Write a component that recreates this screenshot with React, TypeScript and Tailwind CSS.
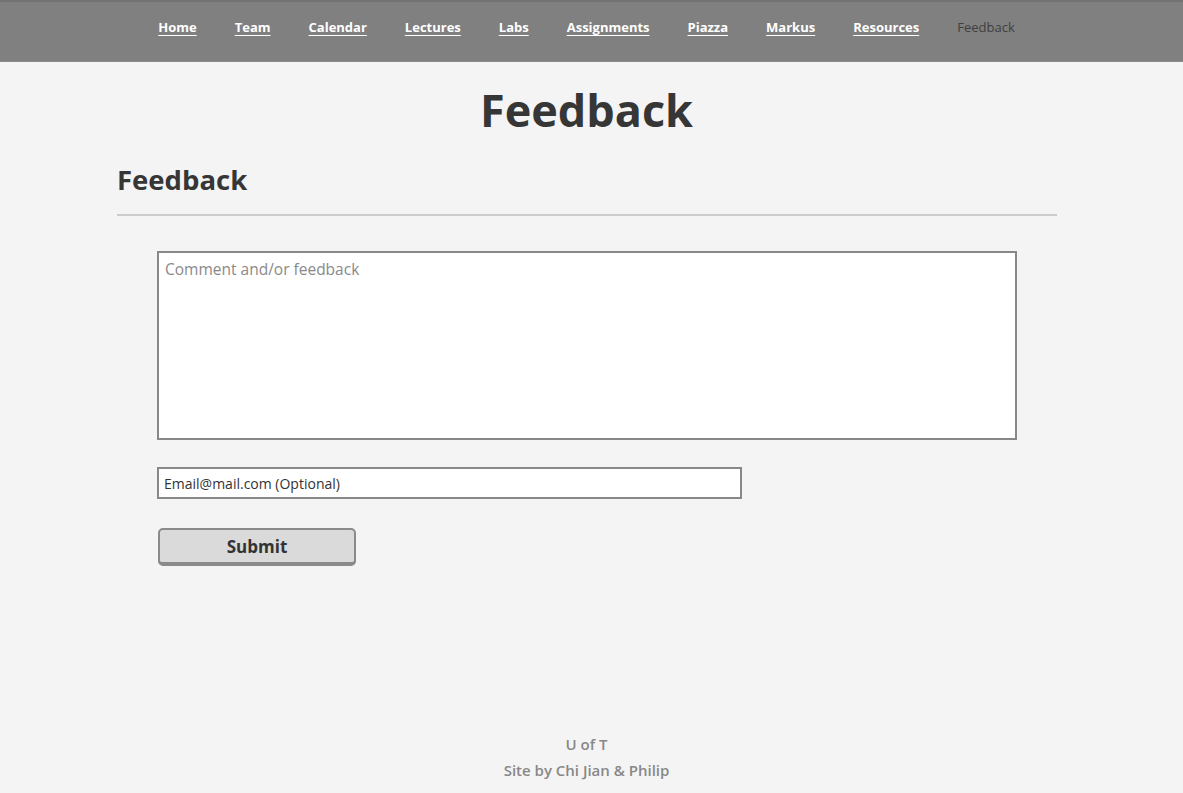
import React from "react";

const links = ["Home", "Team", "Calendar", "Lectures", "Labs", "Assignments", "Piazza", "Markus", "Resources"];

export default function App() {
  return (
    <div className="min-h-[793px] bg-[#f4f4f4] text-[#333] flex flex-col" style={{ fontFamily: '"Open Sans", "Noto Sans", sans-serif' }}>
      <nav className="h-[62px] bg-[#808080] border-t-2 border-[#727272] border-b border-b-[#8a8a8a]">
        <div className="w-[1173px] flex justify-center items-start pt-[15px] gap-[38px]">
          {links.map((l) => (
            <a key={l} href="#" className="text-white font-bold text-[13px] underline underline-offset-[3px] leading-[20px]">
              {l}
            </a>
          ))}
          <span className="text-[#3f3f3f] text-[13px] leading-[20px]">Feedback</span>
        </div>
      </nav>
      <div className="w-[1173px] flex flex-col flex-1">
        <h1 className="text-center font-bold text-[45px] leading-[56px] mt-[20px] text-[#363636]">Feedback</h1>
        <div className="ml-[117px] w-[940px]">
          <h2 className="font-bold text-[27.5px] leading-[36px] mt-[24px] text-[#363636]">Feedback</h2>
          <div className="h-[2px] bg-[#cccccc] mt-[16px]" />
          <div className="pl-[40px] pt-[35px] flex flex-col">
            <textarea
              className="w-[860px] h-[189px] bg-white border-2 border-[#888888] px-[6px] pt-[5px] text-[15.5px] placeholder:text-[#8a8a8a] resize-none outline-none"
              placeholder="Comment and/or feedback"
            />
            <input
              className="mt-[27px] w-[585px] h-[32px] bg-white border-2 border-[#888888] px-[5px] text-[14px] placeholder:text-[#333] outline-none"
              placeholder="Email@mail.com (Optional)"
            />
            <button className="mt-[29px] ml-[1px] w-[198px] h-[38px] pt-[2px] bg-[#dadada] border-2 border-[#8a8a8a] border-b-[4px] rounded-[5px] font-bold text-[17px] leading-[24px] text-[#333]">
              Submit
            </button>
          </div>
        </div>
        <div className="mt-auto pb-[10px] text-center text-[#888] text-[15px] leading-[26px] font-semibold">
          <div>U of T</div>
          <div>Site by Chi Jian &amp; Philip</div>
        </div>
      </div>
    </div>
  );
}
